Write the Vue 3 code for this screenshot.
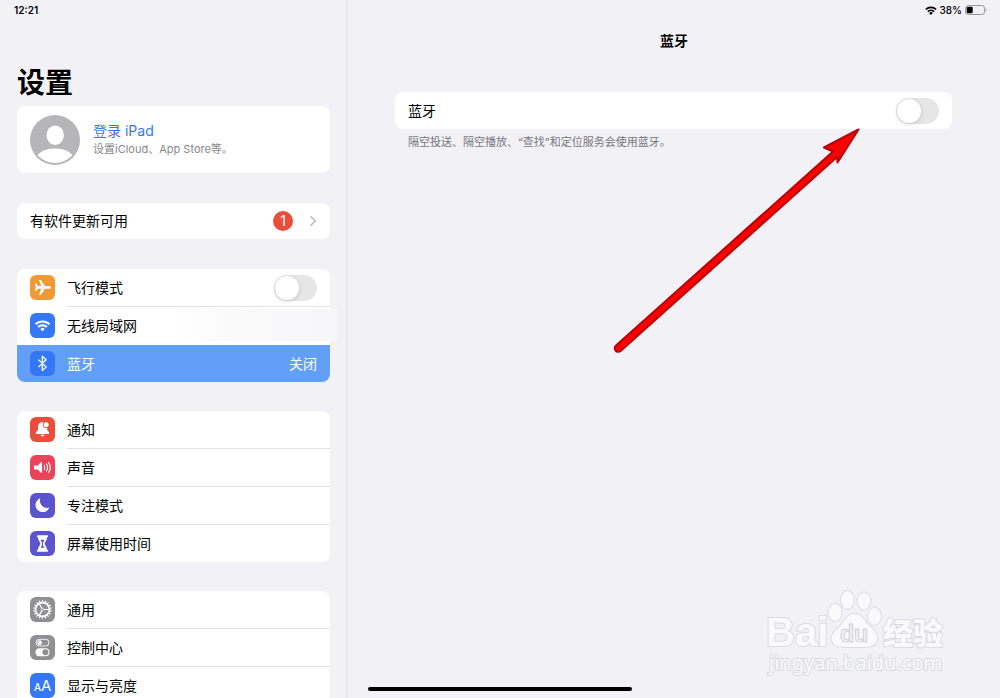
<script setup>
import { ref } from 'vue'

const airplane = ref(false)
const bluetooth = ref(false)

const groups = [
  [
    { id: 'airplane', label: '飞行模式', color: 'orange', toggle: true },
    { id: 'wifi', label: '无线局域网', color: 'blue', redacted: true },
    { id: 'bluetooth', label: '蓝牙', color: 'blue', value: '关闭', selected: true },
  ],
  [
    { id: 'bell', label: '通知', color: 'red' },
    { id: 'sound', label: '声音', color: 'pink' },
    { id: 'moon', label: '专注模式', color: 'indigo' },
    { id: 'hourglass', label: '屏幕使用时间', color: 'indigo' },
  ],
  [
    { id: 'gear', label: '通用', color: 'gray' },
    { id: 'control', label: '控制中心', color: 'gray' },
    { id: 'display', label: '显示与亮度', color: 'blue' },
  ],
]

const teeth = Array.from({ length: 18 }, (_, i) => i * 20)
</script>

<template>
  <div class="page">
    <aside class="sidebar">
      <div class="status"><time>12:21</time></div>
      <h1>设置</h1>

      <a class="card profile" href="#">
        <svg class="avatar" viewBox="0 0 50 50" aria-hidden="true">
          <defs><clipPath id="face"><circle cx="25" cy="25" r="23" /></clipPath></defs>
          <circle cx="25" cy="25" r="25" fill="#b6b6b9" />
          <ellipse cx="25.2" cy="20.2" rx="8.700" ry="9.800" fill="#fff" />
          <ellipse cx="25" cy="44.500" rx="19" ry="11" fill="#fff" clip-path="url(#face)" />
        </svg>
        <span class="who">
          <span class="signin">登录 iPad</span>
          <span class="hint">设置iCloud、App Store等。</span>
        </span>
      </a>

      <a class="card update" href="#">
        <span class="grow">有软件更新可用</span>
        <span class="badge">1</span>
        <svg class="chevron" viewBox="0 0 8 12" aria-hidden="true">
          <path d="M1.500 1.200 6.300 6l-4.800 4.800" fill="none" stroke="#b9b9bd" stroke-width="1.500" />
        </svg>
      </a>

      <ul v-for="(group, g) in groups" :key="g" class="card group">
        <li v-for="row in group" :key="row.id" :class="{ selected: row.selected }">
          <span class="icon" :class="row.color">
            <svg viewBox="0 0 25 25" aria-hidden="true">
              <path v-if="row.id === 'airplane'" fill="#fff" d="M21 12.400c0 .8-1.200 1.400-2.500 1.400h-3.600l-4 5.900H9.100l2.100-5.900H7.900l-1.600 2.300H5l.8-3.700L5 8.700h1.300l1.600 2.300h3.300L9.100 5.100h1.800l4 5.900h3.600c1.300 0 2.500.6 2.500 1.400z" />
              <g v-else-if="row.id === 'wifi'" fill="none" stroke="#fff" stroke-width="1.900">
                <path d="M5.500 11.300a10 10 0 0 1 14 0M8.100 14a6.300 6.300 0 0 1 8.800 0" />
                <path d="m12.500 18.200 2.200-2.300a3.200 3.200 0 0 0-4.400 0z" fill="#fff" stroke="none" />
              </g>
              <path v-else-if="row.id === 'bluetooth'" fill="none" stroke="#fff" stroke-width="1.300" stroke-linejoin="round" d="m8.400 8.600 7.700 7.400-3.800 3.600V5.100l3.800 3.600-7.700 7.400" />
              <g v-else-if="row.id === 'bell'" fill="#fff">
                <path d="M12.300 5c-2.800 0-4.300 2.200-4.300 4.800v2.600c0 1.300-2.300 2.400-2.300 3.800 0 .5.400.7.900.7h11.800c.5 0 .9-.2.900-.7 0-1.400-2.100-2.500-2.100-3.800v-1.600a3.500 3.500 0 0 1-3.700-5.600 5 5 0 0 0-1.200-.2zM10.500 17.800h4c-.3 1-1 1.600-2 1.600s-1.700-.6-2-1.600z" />
                <circle cx="16.200" cy="7.700" r="2.500" />
              </g>
              <g v-else-if="row.id === 'sound'">
                <path fill="#fff" d="M4.800 10.400h3l3.200-3.100c.5-.4 1-.2 1 .4v9.600c0 .6-.5.800-1 .4l-3.200-3.100h-3c-.5 0-.7-.3-.7-.7v-2.800c0-.4.200-.7.700-.7z" />
                <path fill="none" stroke="#fff" stroke-width="1.100" stroke-linecap="round" d="M14.200 10.400a3.800 3.800 0 0 1 0 4.200M16.400 9a6.300 6.300 0 0 1 0 7M18.600 7.500a9 9 0 0 1 0 10" />
              </g>
              <path v-else-if="row.id === 'moon'" fill="#fff" d="M10.300 5.300a7.100 7.100 0 1 0 9 9.200c-5.400 1.900-10.900-3.300-9-9.200z" />
              <g v-else-if="row.id === 'hourglass'">
                <path fill="#fff" d="M7.900 4.300h9.200c.6 0 1 .4 1 .9s-.4 1-1 1h-.1c0 3.300-2.300 4.300-2.300 6.300s2.300 3 2.300 6.300h.1c.6 0 1 .4 1 .9s-.4 1-1 1H7.900c-.6 0-1-.4-1-1s.4-.9 1-.9H8c0-3.300 2.300-4.300 2.300-6.300S8 9.500 8 6.200h-.1c-.6 0-1-.4-1-1s.4-.9 1-.9z" />
                <path fill="#5a55cf" d="M10.400 8.800h4.200l-1.600 2.700v2.700c.2 1 1.100 1.500 1.300 2.500h-3.600c.2-1 1.100-1.500 1.300-2.500v-2.700z" />
              </g>
              <g v-else-if="row.id === 'gear'" stroke="#fff" fill="none">
                <circle cx="12.500" cy="12.500" r="6.900" stroke-width="1.600" />
                <path v-for="a in teeth" :key="a" d="M12.500 5.500V3.200" stroke-width="1.300" :transform="`rotate(${a} 12.500 12.500)`" />
                <circle cx="12.500" cy="12.500" r="1.300" stroke-width=".8" />
                <path d="M13.900 12.500h5M11.800 11.300 9.200 6.500M11.800 13.700l-2.600 4.800" stroke-width="1.200" />
              </g>
              <g v-else-if="row.id === 'control'">
                <rect x="6" y="4.300" width="13" height="6.700" rx="3.350" fill="none" stroke="#fff" stroke-width=".9" />
                <circle cx="9.600" cy="7.650" r="2.300" fill="#fff" />
                <rect x="5.500" y="13.300" width="14" height="8" rx="4" fill="#fff" />
                <circle cx="15.400" cy="17.300" r="3" fill="#8f8f94" />
              </g>
              <g v-else-if="row.id === 'display'" fill="#fff">
                <text x="4" y="18" font-size="10" font-weight="500">A</text>
                <text x="11" y="18" font-size="15">A</text>
              </g>
            </svg>
          </span>
          <span class="label">
            <label v-if="row.toggle" :for="row.id" class="grow">{{ row.label }}</label>
            <span v-else class="grow">{{ row.label }}</span>
            <input v-if="row.toggle" :id="row.id" v-model="airplane" class="switch" type="checkbox" role="switch" />
            <span v-if="row.value">{{ row.value }}</span>
            <span v-if="row.redacted" class="smear"></span>
          </span>
        </li>
      </ul>
    </aside>

    <main class="detail">
      <div class="status end">
        <svg class="signal" viewBox="0 0 12 9" aria-hidden="true">
          <path d="M.8 3.500a7.500 7.500 0 0 1 10.400 0M2.800 5.600a4.600 4.600 0 0 1 6.400 0" fill="none" stroke="#000" stroke-width="1.600" />
          <path d="m6 9 1.900-2a2.800 2.800 0 0 0-3.800 0z" />
        </svg>
        <span>38%</span>
        <svg class="battery" viewBox="0 0 22 10" aria-hidden="true">
          <rect x=".5" y=".5" width="19" height="9" rx="2.700" fill="none" stroke="#98989c" />
          <rect x="1.700" y="1.700" width="6" height="6.600" rx="1.300" />
          <path d="M20.700 3.300c1.200.5 1.200 2.900 0 3.400z" fill="#98989c" />
        </svg>
      </div>
      <h2>蓝牙</h2>
      <section>
        <div class="card option">
          <label for="bt" class="grow">蓝牙</label>
          <input id="bt" v-model="bluetooth" class="switch" type="checkbox" role="switch" />
        </div>
        <p>隔空投送、隔空播放、“查找”和定位服务会使用蓝牙。</p>
      </section>
    </main>

    <svg class="arrow" viewBox="0 0 250 230" aria-hidden="true">
      <path d="M247.500 2.500 213 20.500 222 24.500 5 218.500A3.400 3.400 0 0 0 9.600 224L226 30 226.500 35.500z" fill="#fb0000" stroke="#b80008" stroke-width="2" stroke-linejoin="round" />
    </svg>

    <svg class="watermark" viewBox="0 0 190 90" aria-label="Baidu 经验">
      <g class="ink">
        <text x="2" y="56" class="brand" font-size="40">Bai</text>
        <ellipse cx="71" cy="22.500" rx="6.500" ry="8.500" />
        <ellipse cx="83.500" cy="10" rx="6.500" ry="9" />
        <ellipse cx="100" cy="11" rx="6.500" ry="8.500" />
        <ellipse cx="110.500" cy="26.500" rx="6.500" ry="8.500" />
        <path d="M90.500 24c8 0 9.500 7 16 13 5 4.500 8 8 6.500 13.500-2 7-9 6.500-22.500 6.500s-21 .5-22.500-6.500c-1.500-5.500 2-9 7-13.500 6.500-6 7.500-13 15.500-13z" />
        <text x="119" y="54" class="cn" font-size="30">经验</text>
        <text x="5" y="80" class="url" font-size="20">jingyan.baidu.com</text>
      </g>
      <text x="76" y="52" class="du" font-size="23">du</text>
    </svg>

    <div class="home"></div>
  </div>
</template>

<style>
body {
  background: #f1f1f6;
}
</style>

<style scoped>
.page {
  position: relative;
  display: grid;
  grid-template-columns: minmax(240px, 348fr) 652fr;
  height: 100vh;
  overflow: hidden;
  background: #f1f1f6;
  color: #000;
  font: 14px/20px Inter, "Noto Sans CJK SC", sans-serif;
}

.sidebar {
  box-sizing: border-box;
  min-height: 0;
  overflow: hidden;
  padding: 0 16px 0 17px;
  border-right: 2px solid #e6e6eb;
}

.status {
  display: flex;
  align-items: center;
  height: 20px;
  font-size: 10px;
  font-weight: 600;
}

.sidebar .status {
  margin-left: -3px;
}

.end {
  justify-content: flex-end;
  gap: 3px;
  padding-right: 13px;
  font-weight: 500;
}

.signal {
  width: 12px;
  height: 9px;
}

.battery {
  width: 22px;
  height: 10px;
}

h1 {
  margin: 43px 0 3px;
  font-size: 28px;
  font-weight: 700;
  line-height: 40px;
}

.card {
  border-radius: 8px;
  background: #fff;
  color: inherit;
  text-decoration: none;
}

.grow {
  flex: 1;
}

.profile {
  display: flex;
  align-items: center;
  gap: 13px;
  min-height: 67px;
  padding: 0 13px;
}

.avatar {
  width: 50px;
  height: 50px;
}

.who {
  display: grid;
}

.signin {
  color: #3478f6;
  line-height: 18px;
}

.hint {
  color: #88888c;
  font-size: 11px;
  line-height: 18px;
}

.update {
  display: flex;
  align-items: center;
  height: 36px;
  margin-top: 30px;
  padding: 0 13px;
}

.badge {
  width: 20px;
  height: 20px;
  margin-right: 16px;
  border-radius: 50%;
  background: #eb4d3d;
  color: #fff;
  text-align: center;
}

.chevron {
  width: 8px;
  height: 12px;
}

.group {
  margin: 29px 0 0;
  padding: 0;
  list-style: none;
}

.update + .group {
  margin-top: 30px;
}

.group li {
  display: flex;
  gap: 12px;
  padding-left: 13px;
}

.label {
  position: relative;
  flex: 1;
  display: flex;
  align-items: center;
  height: 37px;
  padding-right: 13px;
  border-bottom: 1px solid #e2e2e4;
}

.group li:last-child .label {
  border-bottom: 0;
}

.group li:has(+ .selected) .label {
  border-color: transparent;
}

.group .selected {
  border-radius: 0 0 8px 8px;
  background: #629ff8;
  color: #fff;
}

.smear {
  position: absolute;
  top: 2px;
  right: -7px;
  width: 165px;
  height: 32px;
  background: linear-gradient(90deg, #fff, #f9f9fa 40%, #f7f7f9);
}

.icon {
  width: 25px;
  height: 25px;
  margin-top: 6px;
  border-radius: 6px;
}

.icon svg {
  display: block;
}

.orange { background: #f09a37; }
.blue { background: #3478f6; }
.red { background: #eb4d3d; }
.pink { background: #ea445a; }
.indigo { background: #5a55cf; }
.gray { background: #8f8f94; }

.switch {
  appearance: none;
  position: relative;
  width: 43px;
  height: 26px;
  margin: 0;
  border-radius: 13px;
  background: #e6e6e7;
}

.switch::before {
  content: "";
  position: absolute;
  top: 1px;
  left: 1px;
  width: 24px;
  height: 24px;
  border-radius: 50%;
  background: #fff;
  box-shadow: 0 1px 4px rgba(0, 0, 0, 0.16);
}

.switch:checked {
  background: #65c466;
}

.switch:checked::before {
  left: 18px;
}

h2 {
  margin: 11px 0 41px;
  font-size: 14px;
  font-weight: 700;
  line-height: 20px;
  text-align: center;
}

section {
  margin: 0 48px 0 47px;
}

.option {
  display: flex;
  align-items: center;
  height: 37px;
  padding: 0 13px;
}

p {
  margin: 4px 13px 0;
  color: #77777b;
  font-size: 11px;
  line-height: 18px;
}

.arrow {
  position: absolute;
  left: 611px;
  top: 127px;
  width: 250px;
  height: 230px;
}

.watermark {
  position: absolute;
  right: 46px;
  bottom: 18px;
  width: 190px;
  height: 90px;
}

.ink {
  fill: #fafafc;
  stroke: #dcdce1;
  stroke-width: 2px;
  paint-order: stroke;
}

.brand,
.du {
  font-family: "Liberation Sans", sans-serif;
  font-weight: 700;
}

.du {
  fill: #f1f1f6;
  stroke: #d2d2d7;
  stroke-width: 1px;
}

.cn {
  font-weight: 900;
}

.url {
  font-family: "Noto Sans", sans-serif;
}

.home {
  position: absolute;
  left: 50%;
  bottom: 7px;
  width: 264px;
  height: 4px;
  border-radius: 2px;
  background: #000;
  transform: translateX(-50%);
}
</style>
